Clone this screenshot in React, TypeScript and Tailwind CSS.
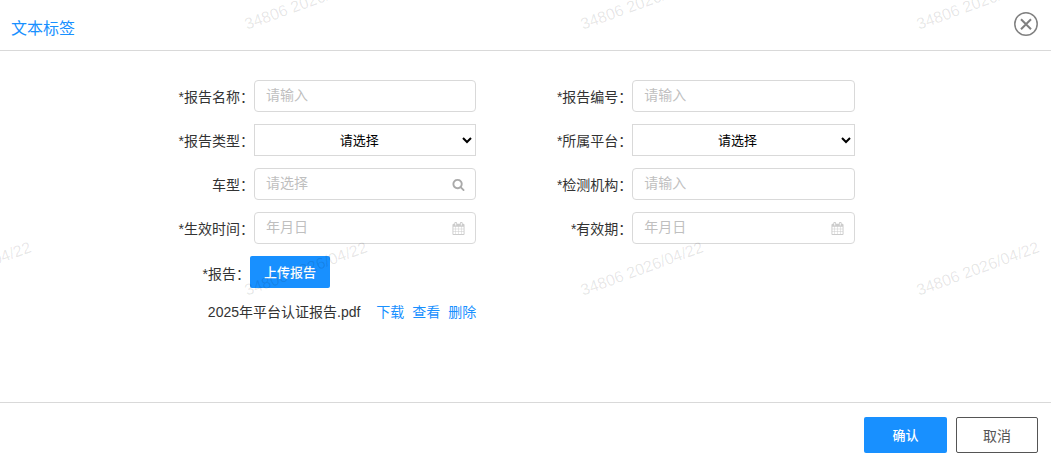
import { useState } from "react";
import type { ReactNode } from "react";

const WATERMARK = "34806 2026/04/22";

function SearchIcon() {
  return (
    <svg viewBox="0 0 1792 1792" width="13" height="13" fill="currentColor" aria-hidden="true">
      <path d="M1216 832q0-185-131.500-316.500t-316.500-131.500-316.500 131.500-131.500 316.500 131.500 316.500 316.500 131.500 316.500-131.500 131.500-316.500zm512 832q0 52-38 90t-90 38q-54 0-90-38l-343-342q-179 124-399 124-143 0-273.500-55.500t-225-150-150-225-55.500-273.500 55.500-273.500 150-225 225-150 273.500-55.500 273.500 55.500 225 150 150 225 55.500 273.500q0 220-124 399l343 343q37 37 37 90z" />
    </svg>
  );
}

function CalendarIcon() {
  return (
    <svg viewBox="0 0 1792 1792" width="13" height="13" fill="currentColor" aria-hidden="true">
      <path d="M192 1664h288v-288h-288v288zm352 0h320v-288h-320v288zm-352-352h288v-320h-288v320zm352 0h320v-320h-320v320zm-352-384h288v-288h-288v288zm736 736h320v-288h-320v288zm-384-736h320v-288h-320v288zm768 736h288v-288h-288v288zm-384-352h320v-320h-320v320zm-352-864v-288q0-13-9.500-22.500t-22.500-9.500h-64q-13 0-22.500 9.500t-9.500 22.500v288q0 13 9.500 22.500t22.500 9.500h64q13 0 22.500-9.500t9.500-22.500zm736 864h288v-320h-288v320zm-384-384h320v-288h-320v288zm384 0h288v-288h-288v288zm32-480v-288q0-13-9.500-22.500t-22.500-9.500h-64q-13 0-22.500 9.500t-9.500 22.500v288q0 13 9.500 22.500t22.500 9.500h64q13 0 22.500-9.500t9.500-22.500zm384-64v1280q0 52-38 90t-90 38h-1408q-52 0-90-38t-38-90v-1280q0-52 38-90t90-38h128v-96q0-66 47-113t113-47h64q66 0 113 47t47 113v96h384v-96q0-66 47-113t113-47h64q66 0 113 47t47 113v96h128q52 0 90 38t38 90z" />
    </svg>
  );
}

function Field({ id, label, children }: { id: string; label: string; children: ReactNode }) {
  return (
    <div className="flex h-8 items-center">
      <label htmlFor={id} className="w-[156px] shrink-0 pt-0.5 text-right text-sm text-[#333]">
        {label}：
      </label>
      {children}
    </div>
  );
}

function TextField({ id, label, placeholder, icon }: { id: string; label: string; placeholder: string; icon?: ReactNode }) {
  return (
    <Field id={id} label={label}>
      <div className="flex h-8 min-w-0 flex-1 items-center rounded border border-[#d9d9d9] pr-2.5 pl-[11px]">
        <input
          id={id}
          type="text"
          placeholder={placeholder}
          className="h-full w-full min-w-0 flex-1 bg-transparent pb-0.5 text-sm text-[#333] outline-none placeholder:text-[#bfbfbf]"
        />
        {icon}
      </div>
    </Field>
  );
}

function SelectField({ id, label }: { id: string; label: string }) {
  return (
    <Field id={id} label={label}>
      <select id={id} className="h-8 min-w-0 flex-1 border border-[#d9d9d9] bg-white text-center text-[13px] text-black">
        <option>请选择</option>
      </select>
    </Field>
  );
}

/* Rotated user/date stamps repeated over the whole dialog */
function Watermark() {
  return (
    <div className="pointer-events-none absolute inset-0 overflow-hidden" aria-hidden="true">
      <div className="-mt-[9px] -ml-[100px] grid w-[1344px] auto-rows-[266px] grid-cols-[repeat(4,336px)] items-start">
        {Array.from({ length: 8 }, (_, i) => (
          <span key={i} className="w-[140px] -rotate-20 text-center text-base text-black/10">
            {WATERMARK}
          </span>
        ))}
      </div>
    </div>
  );
}

export default function App() {
  const [file, setFile] = useState("2025年平台认证报告.pdf");

  return (
    <div className="relative flex min-h-screen flex-col bg-white font-['Liberation_Sans','Noto_Sans_CJK_SC',sans-serif]">
      <header className="flex items-center justify-between border-b border-[#d9d9d9] py-[11px] pr-3 pl-[11px]">
        <h1 className="pt-2 text-base leading-5 text-[#1890ff]">文本标签</h1>
        <button type="button" aria-label="关闭" className="text-[#808080]">
          <svg viewBox="0 0 26 26" width="26" height="26" fill="none" stroke="currentColor" aria-hidden="true">
            <circle cx="13" cy="12" r="11.200" strokeWidth="1.500" />
            <path d="M8 7.300l10 10M18 7.300l-10 10" strokeWidth="2" />
          </svg>
        </button>
      </header>

      <main className="flex-1 pt-[29px] pb-4">
        <form className="ml-[98px] grid w-[72%] grid-cols-2 gap-y-3">
          <TextField id="name" label="*报告名称" placeholder="请输入" />
          <TextField id="code" label="*报告编号" placeholder="请输入" />
          <SelectField id="type" label="*报告类型" />
          <SelectField id="platform" label="*所属平台" />
          <TextField
            id="model"
            label="车型"
            placeholder="请选择"
            icon={<span className="shrink-0 text-[#aaa]"><SearchIcon /></span>}
          />
          <TextField id="agency" label="*检测机构" placeholder="请输入" />
          <TextField
            id="start"
            label="*生效时间"
            placeholder="年月日"
            icon={<span className="shrink-0 text-[#ccc]"><CalendarIcon /></span>}
          />
          <TextField
            id="expiry"
            label="*有效期"
            placeholder="年月日"
            icon={<span className="shrink-0 text-[#ccc]"><CalendarIcon /></span>}
          />
          <div className="col-start-1 flex h-8 items-center">
            <label htmlFor="upload" className="w-[152px] shrink-0 pt-1 text-right text-sm text-[#333]">
              *报告：
            </label>
            <button id="upload" type="button" className="h-8 w-20 rounded-xs bg-[#1890ff] pt-0.5 text-[13px] font-medium text-white">
              上传报告
            </button>
          </div>
          {file && (
            <div className="col-start-1 flex items-center justify-end gap-2 pt-0.5 text-sm">
              <span className="mr-2 text-[#333]">{file}</span>
              <a href="#download" className="text-[#1890ff]">下载</a>
              <a href="#view" className="text-[#1890ff]">查看</a>
              <a href="#delete" className="text-[#1890ff]" onClick={() => setFile("")}>删除</a>
            </div>
          )}
        </form>
      </main>

      <footer className="flex justify-end gap-[9px] border-t border-[#d9d9d9] pt-3.5 pr-[13px] pb-2.5">
        <button type="button" className="h-9 w-[83px] rounded-xs bg-[#1890ff] pt-0.5 text-[13px] font-medium text-white">
          确认
        </button>
        <button type="button" className="h-9 w-[82px] rounded-xs border border-[#555] bg-white pt-0.5 text-sm text-[#555]">
          取消
        </button>
      </footer>

      <Watermark />
    </div>
  );
}
